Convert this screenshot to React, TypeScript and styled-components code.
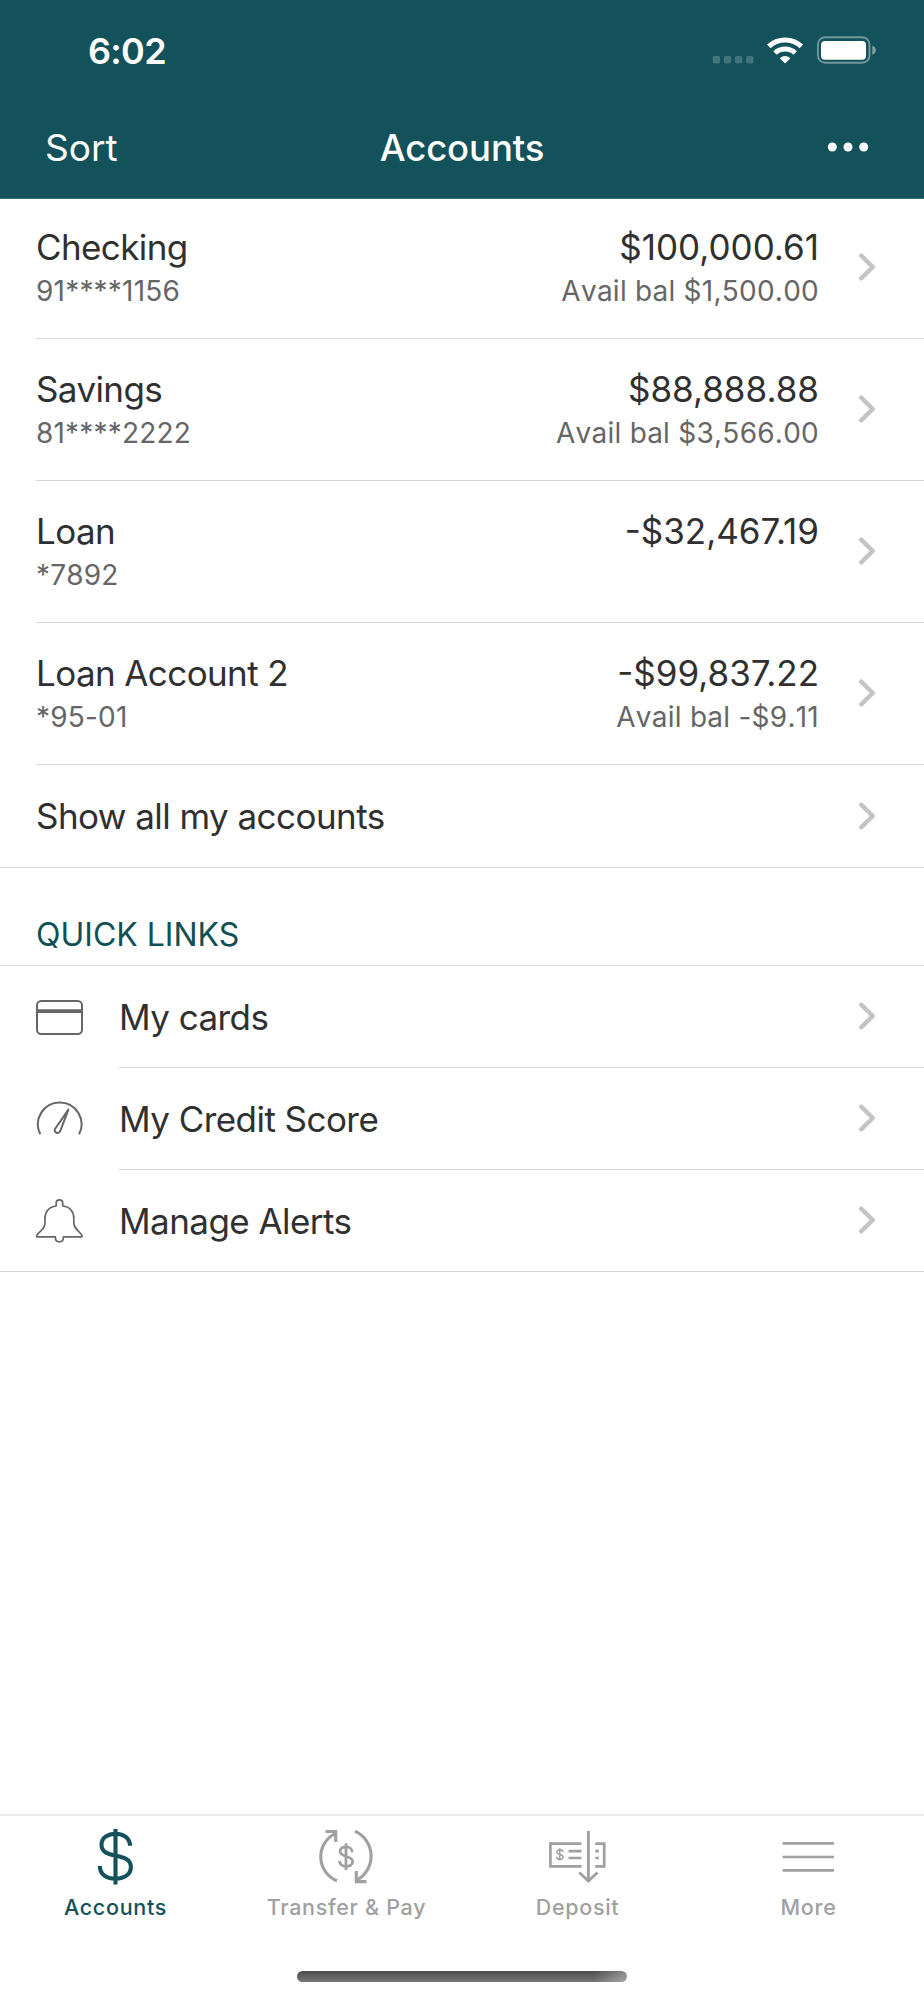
import React from "react";
import styled, { createGlobalStyle } from "styled-components";

interface IAccount {
  name: string;
  number: string;
  balance: string;
  available?: string;
}

const accounts: IAccount[] = [
  { name: "Checking", number: "91****1156", balance: "$100,000.61", available: "$1,500.00" },
  { name: "Savings", number: "81****2222", balance: "$88,888.88", available: "$3,566.00" },
  { name: "Loan", number: "*7892", balance: "-$32,467.19" },
  { name: "Loan Account 2", number: "*95-01", balance: "-$99,837.22", available: "-$9.11" },
];

const Chevron = (): JSX.Element => (
  <ChevronIcon viewBox="0 0 18 28">
    <path d="M3.2 2.7L14.8 14L3.2 25.3" />
  </ChevronIcon>
);

const CardIcon = (): JSX.Element => (
  <LinkIcon viewBox="0 0 47 47">
    <rect x="1" y="7" width="45" height="33" rx="4.2" />
    <path d="M1 17.2H46" strokeWidth="3.8" />
  </LinkIcon>
);

const GaugeIcon = (): JSX.Element => (
  <LinkIcon viewBox="0 0 47 47">
    <path d="M4.3 38.2A21.8 21.8 0 1 1 43.1 38.2" />
    <path d="M32.4 13.6L24.4 34.7C23 38.6 17.4 36.8 19 33Z" strokeLinejoin="round" />
  </LinkIcon>
);

const BellIcon = (): JSX.Element => (
  <LinkIcon viewBox="0 0 47 47">
    <path
      d="M20.2 9V5.8C20.2 1.9 26.7 1.9 26.7 5.8V9C34 9.6 37.8 15 37.8 21V26C37.8 30 40 31.5 45.9 38V39.9H27.4V40.5C27.4 46.3 19.4 46.3 19.4 40.5V39.9H0.9V38C7 31.5 9 30 9 26V21C9 15 13 9.6 20.2 9Z"
      strokeWidth="1.7"
      strokeLinejoin="round"
    />
  </LinkIcon>
);

const links = [
  { label: "My cards", icon: <CardIcon /> },
  { label: "My Credit Score", icon: <GaugeIcon /> },
  { label: "Manage Alerts", icon: <BellIcon /> },
];

const DollarIcon = (): JSX.Element => (
  <TabIcon viewBox="0 0 60 60">
    <path
      d="M30.5 2V57.5M45 18.7C45 11 38.5 6.7 30.8 6.7C22.5 6.7 16.5 11 16.5 17.8C16.5 33.5 45.9 24 45.9 40C45.9 47 40 51.7 30.5 51.7C21 51.7 14.8 47 14.8 39"
      strokeWidth="4.1"
    />
  </TabIcon>
);

const TransferIcon = (): JSX.Element => (
  <TabIcon viewBox="0 0 60 60">
    <path d="M21 53.8A25.8 25.8 0 0 1 18.5 7M9.5 4.5H19.7V15" />
    <path d="M39 4.2A27.4 27.4 0 0 1 41.7 52.7M50.5 54.6H40.3V44" />
    <path
      d="M30 16.3V43M36.3 25.2C36.3 18.2 24 18.2 24 24.3C24 30.5 36.7 28.5 36.7 34.5C36.7 41.2 23.5 41.2 23.5 33.8"
      strokeWidth="2.8"
    />
  </TabIcon>
);

const DepositIcon = (): JSX.Element => (
  <TabIcon viewBox="0 0 60 60">
    <path d="M34.5 16.6H3.4V39.4H34.5M48.2 16.6H57.2V39.4H48.2" strokeWidth="2.7" />
    <path d="M21.5 24.2H34.5M21.5 31H34.5M48.3 24.2H51.9M48.3 31H51.9" strokeWidth="2.7" />
    <path d="M41.4 4V54M32.3 45.5L41.4 54L50.5 45.5" strokeWidth="2.9" />
    <path
      d="M12.8 21.2V33.5M15.9 25C15.9 22 9.9 22 9.9 24.9C9.9 28 16.1 26.6 16.1 30C16.1 33.2 9.6 33.2 9.6 29.7"
      strokeWidth="1.5"
    />
  </TabIcon>
);

const MoreIcon = (): JSX.Element => (
  <TabIcon viewBox="0 0 60 60">
    <path d="M4.6 16.4H55.9M4.6 30H55.9M4.6 43.4H55.9" strokeWidth="2.7" />
  </TabIcon>
);

const tabs = [
  { label: "Accounts", icon: <DollarIcon />, active: true },
  { label: "Transfer & Pay", icon: <TransferIcon /> },
  { label: "Deposit", icon: <DepositIcon /> },
  { label: "More", icon: <MoreIcon /> },
];

const StatusIcons = (): JSX.Element => (
  <svg width="166" height="30" viewBox="0 0 166 30">
    <g fill="#fff" fillOpacity="0.2">
      <rect x="2.6" y="21" width="7.5" height="7.5" rx="2" />
      <rect x="13.8" y="21" width="7.5" height="7.5" rx="2" />
      <rect x="24.9" y="21" width="7.5" height="7.5" rx="2" />
      <rect x="36" y="21" width="7.5" height="7.5" rx="2" />
    </g>
    <g fill="none" stroke="#fff" strokeWidth="5">
      <path d="M58.8 11.3A24 24 0 0 1 91.4 11.3" />
      <path d="M65 18A15 15 0 0 1 85.2 18" />
    </g>
    <path d="M69.8 23.3Q75.1 18.9 80.4 23.3L75.1 28.6Z" fill="#fff" />
    <rect x="107.9" y="2.2" width="51.6" height="25.6" rx="7.2" fill="none" stroke="#fff" strokeOpacity="0.4" strokeWidth="1.9" />
    <rect x="111" y="6" width="45" height="18.7" rx="4" fill="#fff" />
    <path d="M162.3 10.8Q165.8 12.2 165.8 15.3Q165.8 18.4 162.3 19.7Z" fill="#fff" fillOpacity="0.45" />
  </svg>
);

const App = (): JSX.Element => {
  return (
    <Screen>
      <GlobalStyle />
      <Header>
        <StatusBar>
          <Time>6:02</Time>
          <StatusIcons />
        </StatusBar>
        <NavBar>
          <SortButton>Sort</SortButton>
          <Title>Accounts</Title>
          <MenuButton>
            <svg width="42" height="10" viewBox="0 0 42 10" fill="#fff">
              <circle cx="5.3" cy="5" r="4.5" />
              <circle cx="21" cy="5" r="4.5" />
              <circle cx="36.7" cy="5" r="4.5" />
            </svg>
          </MenuButton>
        </NavBar>
      </Header>

      <AccountList>
        {accounts.map(({ name, number, balance, available }) => (
          <AccountRow key={name}>
            <Info>
              <Name>{name}</Name>
              <Sub>{number}</Sub>
            </Info>
            <Amounts>
              <Balance>{balance}</Balance>
              {available && <Available>Avail bal {available}</Available>}
            </Amounts>
            <Chevron />
          </AccountRow>
        ))}
      </AccountList>
      <ShowAll>
        <Label>Show all my accounts</Label>
        <Chevron />
      </ShowAll>

      <SectionTitle>QUICK LINKS</SectionTitle>
      <LinkList>
        {links.map(({ label, icon }) => (
          <LinkRow key={label}>
            {icon}
            <LinkBody>
              <Label>{label}</Label>
              <Chevron />
            </LinkBody>
          </LinkRow>
        ))}
      </LinkList>

      <TabBar>
        {tabs.map(({ label, icon, active }) => (
          <Tab key={label} $active={active}>
            {icon}
            <TabLabel>{label}</TabLabel>
          </Tab>
        ))}
      </TabBar>
      <HomeIndicator />
    </Screen>
  );
};

export default App;

const GlobalStyle = createGlobalStyle`
  * {
    box-sizing: border-box;
  }
  body {
    margin: 0;
    background: #fff;
    font-family: Inter, "Liberation Sans", sans-serif;
  }
`;

const Screen = styled.div`
  display: flex;
  flex-direction: column;
  width: 924px;
  height: 2000px;
  color: #303030;
  background: #fff;
`;

const Header = styled.header`
  height: 199px;
  color: #fff;
  background: #13525a;
  border-bottom: 1px solid #3c7279;
`;

const StatusBar = styled.div`
  display: flex;
  align-items: center;
  justify-content: space-between;
  height: 100px;
  padding: 0 48px 0 88px;
`;

const Time = styled.span`
  padding-top: 1px;
  font-size: 36px;
  font-weight: 600;
  letter-spacing: -0.7px;
`;

const NavBar = styled.nav`
  display: grid;
  grid-template-columns: 1fr auto 1fr;
  align-items: center;
  height: 94px;
  padding: 0 55px 0 45px;
`;

const SortButton = styled.span`
  font-size: 37px;
`;

const Title = styled.h1`
  margin: 0;
  padding: 2px 0 0 10px;
  font-size: 36.5px;
  font-weight: 500;
  letter-spacing: -0.1px;
`;

const MenuButton = styled.span`
  display: flex;
  justify-content: flex-end;
`;

const AccountList = styled.div`
  padding-left: 36px;
`;

const AccountRow = styled.div`
  display: flex;
  align-items: center;
  height: 142px;
  padding: 0 48px 2px 0;
  border-bottom: 1px solid #d8d8d8;

  &:first-child {
    height: 140px;
    padding-bottom: 4px;
  }
`;

const Info = styled.div`
  flex: 1;
  height: 88px;
`;

const Amounts = styled.div`
  height: 88px;
  margin-right: 39px;
  text-align: right;
`;

const Name = styled.div`
  font-size: 35px;
  line-height: 48px;
  letter-spacing: -0.6px;
`;

const Balance = styled(Name)`
  letter-spacing: 0;
`;

const Sub = styled.div`
  color: #666;
  font-size: 28px;
  line-height: 41px;
  font-kerning: none;
  letter-spacing: 0.2px;
`;

const Available = styled(Sub)`
  line-height: 40px;
  letter-spacing: 0.25px;
`;

const ChevronIcon = styled.svg`
  width: 18px;
  height: 28px;
  fill: none;
  stroke: #c4c4c6;
  stroke-width: 4.4;
  stroke-linecap: round;
  stroke-linejoin: round;
`;

const ShowAll = styled.div`
  display: flex;
  align-items: center;
  justify-content: space-between;
  height: 103px;
  padding: 0 48px 1px 36px;
  border-bottom: 1px solid #d8d8d8;
`;

const Label = styled.span`
  padding-top: 1px;
  font-size: 35px;
  line-height: 48px;
  letter-spacing: -0.55px;
`;

const SectionTitle = styled.h2`
  height: 98px;
  margin: 0;
  padding: 47px 0 0 36px;
  color: #0f5057;
  font-size: 32px;
  font-weight: 400;
  line-height: 40px;
  border-bottom: 1px solid #d8d8d8;
`;

const LinkList = styled.div`
  border-bottom: 1px solid #d8d8d8;
`;

const LinkRow = styled.div`
  display: flex;
  align-items: center;
  gap: 36px;
  padding-left: 36px;
`;

const LinkBody = styled.div`
  display: flex;
  flex: 1;
  align-items: center;
  justify-content: space-between;
  height: 102px;
  padding: 0 48px 1px 0;
  border-bottom: 1px solid #d8d8d8;

  ${LinkRow}:last-child & {
    height: 101px;
    border-bottom: none;
  }
`;

const LinkIcon = styled.svg`
  width: 47px;
  height: 47px;
  fill: none;
  stroke: #666;
  stroke-width: 2;
`;

const TabBar = styled.nav`
  display: grid;
  grid-template-columns: repeat(4, 1fr);
  height: 157px;
  margin-top: auto;
  border-top: 2px solid #eaeaea;
`;

const Tab = styled.div<{ $active?: boolean }>`
  display: flex;
  flex-direction: column;
  align-items: center;
  padding-top: 11px;
  color: ${({ $active }) => ($active ? "#13525a" : "#a0a0a0")};
`;

const TabIcon = styled.svg`
  width: 60px;
  height: 60px;
  margin-right: 1px;
  fill: none;
  stroke: currentColor;
  stroke-width: 3.1;
`;

const TabLabel = styled.span`
  margin-top: 5px;
  font-size: 21.5px;
  font-weight: 500;
  line-height: 30px;
  letter-spacing: 0.7px;
`;

const HomeIndicator = styled.div`
  width: 330px;
  height: 11px;
  margin: 0 auto 18px;
  border-radius: 6px;
  background: linear-gradient(90deg, transparent 90%, rgba(255, 255, 255, 0.35)), linear-gradient(#4c4c4c, #777);
`;
